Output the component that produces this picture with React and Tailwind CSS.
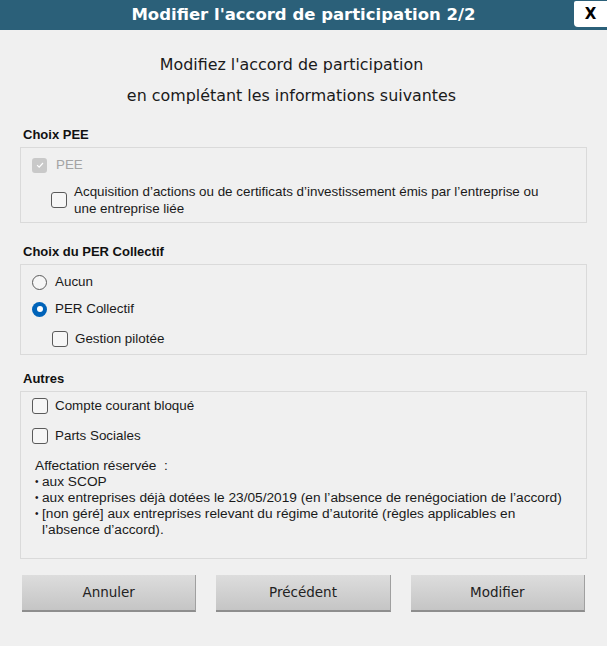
import { useState } from 'react'

const font = { fontFamily: '"Liberation Sans", Arial, sans-serif' }
const tahoma = { fontFamily: '"DejaVu Sans", Verdana, sans-serif' }

function Checkbox({ checked, disabled, onChange }) {
  if (disabled) {
    return (
      <span className="flex h-[15px] w-[15px] shrink-0 items-center justify-center rounded-[3px] bg-[#c9c9c9]">
        {checked && (
          <svg viewBox="0 0 12 12" className="h-[10px] w-[10px]">
            <path d="M2.5 6.2 L5 8.6 L9.6 3.6" fill="none" stroke="#fff" strokeWidth="1.4" />
          </svg>
        )}
      </span>
    )
  }
  return (
    <span
      onClick={onChange}
      className="flex h-[16px] w-[16px] shrink-0 cursor-pointer items-center justify-center rounded-[3px] border border-[#5a5a5a] bg-[#f6f6f6]"
    >
      {checked && (
        <svg viewBox="0 0 12 12" className="h-[10px] w-[10px]">
          <path d="M2.5 6.2 L5 8.6 L9.6 3.6" fill="none" stroke="#222" strokeWidth="1.4" />
        </svg>
      )}
    </span>
  )
}

function Radio({ checked, onChange }) {
  if (checked) {
    return (
      <span onClick={onChange} className="flex h-[15px] w-[15px] shrink-0 cursor-pointer items-center justify-center rounded-full bg-[#0063b9]">
        <span className="h-[6px] w-[6px] rounded-full bg-white" />
      </span>
    )
  }
  return (
    <span onClick={onChange} className="h-[15px] w-[15px] shrink-0 cursor-pointer rounded-full border border-[#5a5a5a] bg-[#f6f6f6]" />
  )
}

function SectionLabel({ children }) {
  return <div className="h-[20px] pl-[23px] text-[13px] font-bold leading-[20px] text-[#111]">{children}</div>
}

function Button({ children }) {
  return (
    <button
      style={tahoma}
      className="h-[37px] border-r border-b-2 border-r-[#a0a0a0] border-b-[#8e8e8e] bg-gradient-to-b from-[#dddddd] to-[#c5c5c5] text-[13.5px] text-[#222]"
    >
      {children}
    </button>
  )
}

function Bullet({ children }) {
  return (
    <li className="flex">
      <span className="w-[7px] shrink-0 text-[10px]">•</span>
      <span>{children}</span>
    </li>
  )
}

export default function App() {
  const [acq, setAcq] = useState(false)
  const [per, setPer] = useState('per')
  const [pilot, setPilot] = useState(false)
  const [compte, setCompte] = useState(false)
  const [parts, setParts] = useState(false)

  return (
    <div className="h-[646px] w-[607px] bg-[#f0f0f0] text-[#1a1a1a]" style={font}>
      {/* Title bar */}
      <div className="relative flex h-[30px] items-center justify-center bg-[#2b6079]">
        <span style={tahoma} className="text-[16.5px] font-bold text-white">Modifier l'accord de participation 2/2</span>
        <div
          style={tahoma}
          className="absolute right-0 top-[1px] flex h-[26px] w-[33px] items-center justify-center rounded-bl-[4px] rounded-tl-[2px] bg-white text-[15px] font-bold text-black"
        >
          X
        </div>
      </div>

      {/* Heading */}
      <div style={tahoma} className="pr-[24px] pt-[19px] text-center text-[15.9px] leading-[31px] text-[#1a1a1a]">
        <div>Modifiez l'accord de participation</div>
        <div>en complétant les informations suivantes</div>
      </div>

      {/* Choix PEE */}
      <div className="mt-[14px]">
        <SectionLabel>Choix PEE</SectionLabel>
        <div className="mx-[20px] mt-[2px] border border-[#dadada] pb-[5px] pl-[11px] pt-[8px] text-[13.4px]">
          <div className="flex h-[18px] items-center gap-[9px]">
            <Checkbox checked disabled />
            <span className="text-[#a3a3a3]">PEE</span>
          </div>
          <div className="mt-[9px] flex items-center gap-[7px] pl-[19px]">
            <Checkbox checked={acq} onChange={() => setAcq(!acq)} />
            <span className="leading-[17px]">
              Acquisition d’actions ou de certificats d’investissement émis par l’entreprise ou
              <br />
              une entreprise liée
            </span>
          </div>
        </div>
      </div>

      {/* Choix du PER Collectif */}
      <div className="mt-[19px]">
        <SectionLabel>Choix du PER Collectif</SectionLabel>
        <div className="mx-[20px] mt-[2px] border border-[#dadada] pb-[6px] pl-[11px] pt-[8px] text-[13.4px]">
          <div className="flex h-[18px] items-center gap-[8px]">
            <Radio checked={per === 'aucun'} onChange={() => setPer('aucun')} />
            <span>Aucun</span>
          </div>
          <div className="mt-[9px] flex h-[18px] items-center gap-[8px]">
            <Radio checked={per === 'per'} onChange={() => setPer('per')} />
            <span>PER Collectif</span>
          </div>
          <div className="mt-[12px] flex h-[18px] items-center gap-[7px] pl-[20px]">
            <Checkbox checked={pilot} onChange={() => setPilot(!pilot)} />
            <span>Gestion pilotée</span>
          </div>
        </div>
      </div>

      {/* Autres */}
      <div className="mt-[14px]">
        <SectionLabel>Autres</SectionLabel>
        <div className="mx-[20px] mt-[2px] border border-[#dadada] pb-[20px] pl-[11px] pt-[5px] text-[13.4px]">
          <div className="flex h-[18px] items-center gap-[7px]">
            <Checkbox checked={compte} onChange={() => setCompte(!compte)} />
            <span>Compte courant bloqué</span>
          </div>
          <div className="mt-[12px] flex h-[18px] items-center gap-[7px]">
            <Checkbox checked={parts} onChange={() => setParts(!parts)} />
            <span>Parts Sociales</span>
          </div>
          <div className="mt-[13px] pl-[3px] text-[13.7px] leading-[16px]">
            <div>Affectation réservée&nbsp; :</div>
            <ul>
              <Bullet>aux SCOP</Bullet>
              <Bullet>aux entreprises déjà dotées le 23/05/2019 (en l’absence de renégociation de l’accord)</Bullet>
              <Bullet>
                [non géré] aux entreprises relevant du régime d’autorité (règles applicables en
                <br />
                l’absence d’accord).
              </Bullet>
            </ul>
          </div>
        </div>
      </div>

      {/* Buttons */}
      <div className="mt-[16px] grid grid-cols-3 gap-[20px] px-[22px]">
        <Button>Annuler</Button>
        <Button>Précédent</Button>
        <Button>Modifier</Button>
      </div>
    </div>
  )
}
